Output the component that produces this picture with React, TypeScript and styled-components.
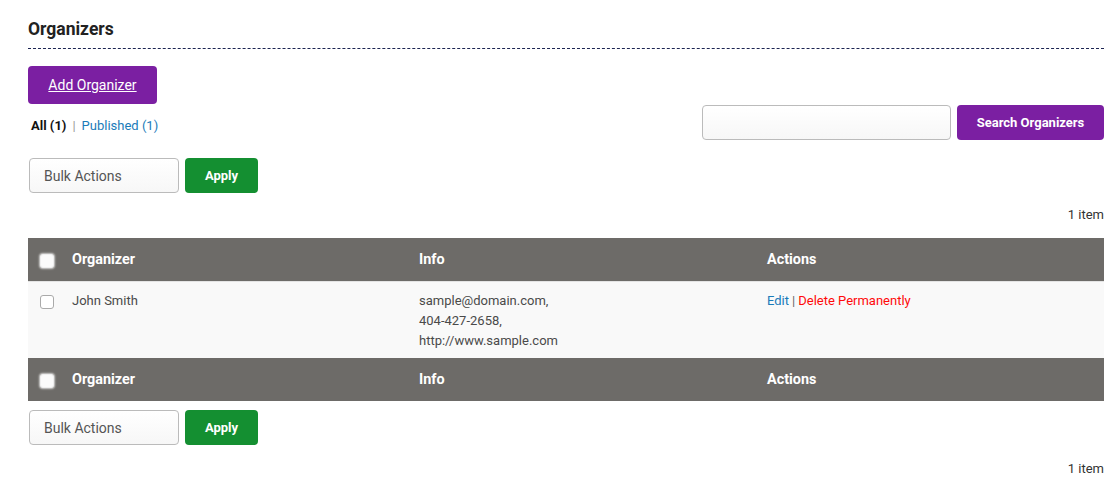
import React from "react";
import styled, { createGlobalStyle } from "styled-components";

const Global = createGlobalStyle`
  body { margin: 0; background: #fff; font-family: Roboto, "Liberation Sans", sans-serif; color: #333; }
`;

const Page = styled.div`
  padding: 18px 14px 0 28px;
`;

const Title = styled.h2`
  margin: 0;
  font-size: 17.5px;
  font-weight: 700;
  color: #222;
  line-height: 22px;
  padding-bottom: 8px;
  border-bottom: 1px dashed #1c2452;
`;

const PurpleButton = styled.button<{ $underline?: boolean; $w: number; $h: number; $size: number; $bold?: boolean }>`
  background: #7b1fa2;
  color: #fff;
  border: none;
  border-radius: 4px;
  width: ${(p) => p.$w}px;
  height: ${(p) => p.$h}px;
  font-family: Roboto, "Liberation Sans", sans-serif;
  font-size: ${(p) => p.$size}px;
  font-weight: ${(p) => (p.$bold ? 700 : 400)};
  text-decoration: ${(p) => (p.$underline ? "underline" : "none")};
  padding: 0;
  cursor: pointer;
`;

const AddWrap = styled.div`
  margin-top: 17px;
  display: flex;
`;

const FilterRow = styled.div`
  display: flex;
  justify-content: space-between;
  align-items: flex-start;
  margin-top: 1px;
`;

const Filters = styled.div`
  font-size: 13px;
  display: flex;
  gap: 6px;
  align-items: center;
  padding: 13px 0 0 3px;
  line-height: 16px;
`;

const FilterLink = styled.span<{ $active?: boolean }>`
  color: ${(p) => (p.$active ? "#111" : "#1a7bb9")};
  font-weight: ${(p) => (p.$active ? 700 : 400)};
`;

const Sep = styled.span`
  color: #999;
`;

const SearchBox = styled.div`
  display: flex;
  gap: 6px;
  align-items: center;
`;

const SearchInput = styled.input`
  width: 249px;
  height: 35px;
  box-sizing: border-box;
  border: 1px solid #bbb;
  border-radius: 4px;
  background: linear-gradient(#fff, #f7f7f7);
`;

const BulkRow = styled.div<{ $mt: number }>`
  display: flex;
  gap: 6px;
  margin-top: ${(p) => p.$mt}px;
  padding-left: 1px;
`;

const Select = styled.div`
  width: 150px;
  height: 35px;
  box-sizing: border-box;
  border: 1px solid #bbb;
  border-radius: 4px;
  background: linear-gradient(#fff, #f7f7f7);
  font-size: 14px;
  color: #555;
  display: flex;
  align-items: center;
  padding-left: 14px;
`;

const Apply = styled.button`
  width: 73px;
  height: 35px;
  background: #148f31;
  color: #fff;
  border: none;
  border-radius: 4px;
  font-family: Roboto, "Liberation Sans", sans-serif;
  font-size: 13px;
  font-weight: 700;
`;

const Count = styled.div<{ $mt: number }>`
  text-align: right;
  font-size: 13px;
  color: #333;
  margin-top: ${(p) => p.$mt}px;
  line-height: 16px;
`;

const Table = styled.div`
  margin-top: 15px;
  display: flex;
  flex-direction: column;
`;

const Grid = styled.div`
  display: grid;
  grid-template-columns: 44px 347px 348px 1fr;
`;

const HeadRow = styled(Grid)`
  background: #6d6b68;
  height: 43px;
  align-items: center;
  color: #fff;
  font-size: 14.4px;
  font-weight: 700;
`;

const BodyRow = styled(Grid)`
  background: #f9f9f9;
  border-top: 1px solid #e4e4e4;
  padding: 9px 0 7px;
  font-size: 13px;
  color: #4a4a4a;
  line-height: 20px;
`;

const CheckCell = styled.div`
  display: flex;
  justify-content: flex-start;
  padding-left: 12px;
`;

const Box = styled.span<{ $head?: boolean }>`
  display: inline-block;
  width: 14px;
  height: 14px;
  border-radius: 3px;
  box-sizing: border-box;
  background: ${(p) => (p.$head ? "#fbfbfb" : "#fff")};
  border: 1px solid ${(p) => (p.$head ? "#eee" : "#aaa")};
  box-shadow: ${(p) => (p.$head ? "0 0 2px 1px rgba(255,255,255,0.7)" : "none")};
  margin-top: ${(p) => (p.$head ? "3px" : "4px")};
`;

const Edit = styled.span`
  color: #1a7bb9;
`;
const Del = styled.span`
  color: #ff0a0a;
`;
const Pipe = styled.span`
  color: #666;
  margin: 0 3px;
`;

const Header = () => (
  <HeadRow>
    <CheckCell>
      <Box $head />
    </CheckCell>
    <div>Organizer</div>
    <div>Info</div>
    <div>Actions</div>
  </HeadRow>
);

export default function App() {
  return (
    <>
      <Global />
      <Page>
        <Title>Organizers</Title>
        <AddWrap>
          <PurpleButton $underline $w={129} $h={38} $size={14}>
            Add Organizer
          </PurpleButton>
        </AddWrap>
        <FilterRow>
          <Filters>
            <FilterLink $active>All (1)</FilterLink>
            <Sep>|</Sep>
            <FilterLink>Published (1)</FilterLink>
          </Filters>
          <SearchBox>
            <SearchInput />
            <PurpleButton $w={147} $h={35} $size={13} $bold>
              Search Organizers
            </PurpleButton>
          </SearchBox>
        </FilterRow>
        <BulkRow $mt={18}>
          <Select>Bulk Actions</Select>
          <Apply>Apply</Apply>
        </BulkRow>
        <Count $mt={14}>1 item</Count>
        <Table>
          <Header />
          <BodyRow>
            <CheckCell>
              <Box />
            </CheckCell>
            <div>John Smith</div>
            <div>
              sample@domain.com,
              <br />
              404-427-2658,
              <br />
              http://www.sample.com
            </div>
            <div>
              <Edit>Edit</Edit>
              <Pipe>|</Pipe>
              <Del>Delete Permanently</Del>
            </div>
          </BodyRow>
          <Header />
        </Table>
        <BulkRow $mt={9}>
          <Select>Bulk Actions</Select>
          <Apply>Apply</Apply>
        </BulkRow>
        <Count $mt={16}>1 item</Count>
      </Page>
    </>
  );
}
